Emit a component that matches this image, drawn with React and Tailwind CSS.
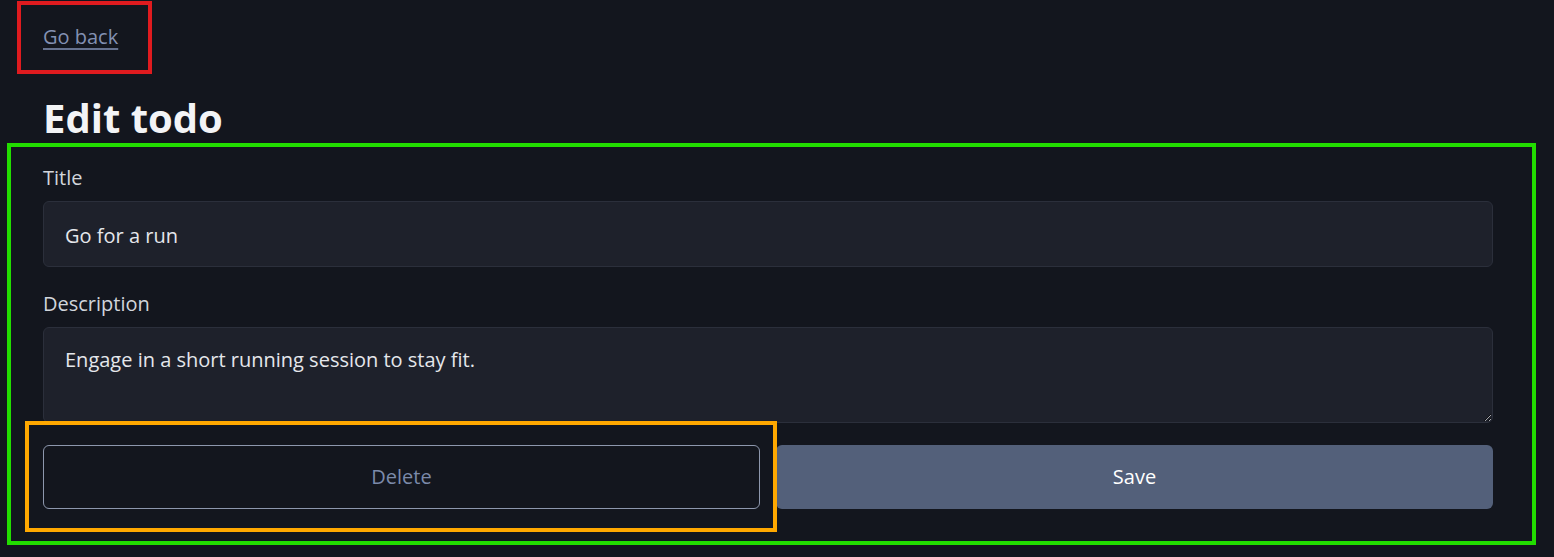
import React from 'react';

export default function App() {
  return (
    <div className="relative min-h-screen bg-[#13161e] font-['Open_Sans','Noto_Sans',sans-serif] text-[20px]">
      <div className="w-[1450px] ml-[43px] pt-[22px] flex flex-col">
        {/* back link */}
        <div className="leading-[30px]">
          <a href="#" className="text-[#8391b3] underline decoration-[#66728f] underline-offset-[4px]">
            Go back
          </a>
        </div>

        <h1 className="mt-[42px] text-[40px] leading-[48px] font-bold text-[#f3f4f6]">Edit todo</h1>

        <form className="mt-[21px] flex flex-col">
          <label className="text-[#d1d5db] leading-[30px]">Title</label>
          <input
            defaultValue="Go for a run"
            className="mt-[8px] h-[66px] w-full rounded-[6px] border border-[#2b2f3b] bg-[#1e212b] px-[21px] pt-[2px] text-[#e5e7eb] outline-none"
          />

          <label className="mt-[22px] text-[#d1d5db] leading-[30px]">Description</label>
          <textarea
            defaultValue="Engage in a short running session to stay fit."
            className="mt-[8px] h-[96px] w-full rounded-[6px] border border-[#2b2f3b] bg-[#1e212b] px-[21px] py-[17px] leading-[30px] text-[#e5e7eb] outline-none"
          />

          <div className="mt-[22px] grid grid-cols-2 gap-[16px]">
            <button type="button" className="h-[64px] rounded-[6px] border border-[#8d97ad] text-[#7b8aaa]">
              Delete
            </button>
            <button type="button" className="h-[64px] rounded-[6px] bg-[#53607a] text-white">
              Save
            </button>
          </div>
        </form>
      </div>

      {/* annotation boxes */}
      <div className="pointer-events-none absolute left-[17px] top-[1px] h-[73px] w-[135px] border-[4px] border-[#e01b1f]"></div>
      <div className="pointer-events-none absolute left-[7px] top-[143px] h-[402px] w-[1529px] border-[4px] border-[#22dd00]"></div>
      <div className="pointer-events-none absolute left-[25px] top-[421px] h-[111px] w-[752px] border-[4px] border-[#ffa800]"></div>
    </div>
  );
}
